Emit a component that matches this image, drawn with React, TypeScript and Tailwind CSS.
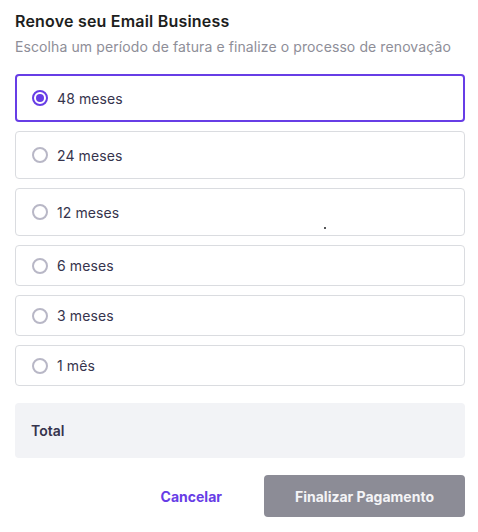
import React from "react";

const options = [
  { label: "48 meses", h: "h-[48px]", selected: true },
  { label: "24 meses", h: "h-[48px]", selected: false },
  { label: "12 meses", h: "h-[48px]", selected: false },
  { label: "6 meses", h: "h-[41px]", selected: false },
  { label: "3 meses", h: "h-[41px]", selected: false },
  { label: "1 mês", h: "h-[41px]", selected: false },
];

export default function App() {
  return (
    <div
      className="relative w-[478px] h-[532px] bg-white pl-[15px] pr-[13px] pt-[11px]"
      style={{ fontFamily: "Inter, 'DejaVu Sans', sans-serif" }}
    >
      <h1 className="text-[16px] leading-[20px] font-semibold text-[#1d1e20] tracking-[0.2px]">
        Renove seu Email Business
      </h1>
      <p className="mt-[6px] text-[14px] leading-[20px] text-[#8e8e98] tracking-[0.1px]">
        Escolha um período de fatura e finalize o processo de renovação
      </p>
      <div className="mt-[17px] flex flex-col gap-[9px]">
        {options.map((o) => (
          <div
            key={o.label}
            className={`${o.h} flex items-center rounded-[4px] ${
              o.selected
                ? "border-2 border-[#673de6] px-[15px]"
                : "border border-[#dadce0] px-[16px]"
            }`}
          >
            {o.selected ? (
              <span className="flex h-[16px] w-[16px] items-center justify-center rounded-full border-2 border-[#673de6]">
                <span className="h-[8px] w-[8px] rounded-full bg-[#673de6]" />
              </span>
            ) : (
              <span className="h-[16px] w-[16px] rounded-full border-2 border-[#b8b7c6]" />
            )}
            <span className="ml-[9px] text-[14px] text-[#36344d] tracking-[0.1px]">{o.label}</span>
          </div>
        ))}
      </div>
      <div className="mt-[17px] flex h-[55px] items-center rounded-[4px] bg-[#f2f3f6] px-[16px]">
        <span className="text-[14px] font-semibold text-[#36344d]">Total</span>
      </div>
      <div className="mt-[17px] flex items-center justify-end">
        <button className="mr-[42px] text-[14px] font-bold text-[#673de6]">Cancelar</button>
        <button className="h-[42px] w-[201px] rounded-[4px] bg-[#8c8c96] text-[14px] font-bold text-[#f4f4f6]">
          Finalizar Pagamento
        </button>
      </div>
      <span className="absolute left-[324px] top-[227px] h-[2px] w-[2px] rounded-full bg-[#1d1e20]" />
    </div>
  );
}
